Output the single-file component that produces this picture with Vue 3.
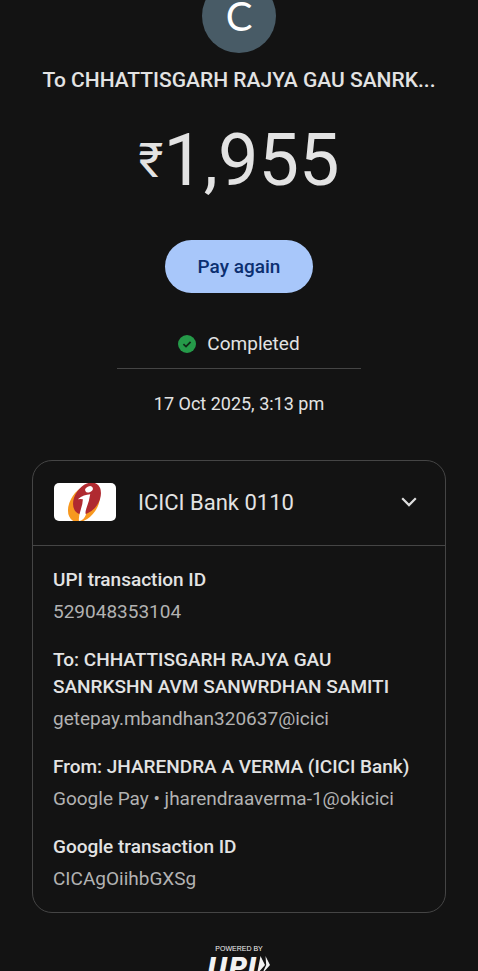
<script setup>
import { ref } from 'vue'

const open = ref(true)
const details = [
  { label: 'UPI transaction ID', value: '529048353104' },
  { label: 'To: CHHATTISGARH RAJYA GAU SANRKSHN AVM SANWRDHAN SAMITI', value: 'getepay.mbandhan320637@icici' },
  { label: 'From: JHARENDRA A VERMA (ICICI Bank)', value: 'Google Pay • jharendraaverma-1@okicici' },
  { label: 'Google transaction ID', value: 'CICAgOiihbGXSg' },
]
</script>

<template>
  <main class="page">
    <div class="avatar">C</div>
    <h1 class="payee">To CHHATTISGARH RAJYA GAU SANRK...</h1>
    <p class="amount"><span class="currency">₹</span><span>1,955</span></p>
    <button type="button" class="pay">Pay again</button>
    <div class="status">
      <svg class="tick" viewBox="0 0 18 18" aria-hidden="true">
        <circle cx="9" cy="9" r="9" fill="#259a49" />
        <path d="M5.4 9.2 L8 11.6 L12.6 6.9" fill="none" stroke="#102817" stroke-width="1.8" />
      </svg>
      <span>Completed</span>
    </div>
    <p class="date">17 Oct 2025, 3:13 pm</p>

    <section class="card">
      <button type="button" class="bank" :aria-expanded="open" @click="open = !open">
        <svg class="bank-logo" viewBox="0 0 62 38" aria-hidden="true">
          <rect width="62" height="38" rx="5" fill="#fff" />
          <ellipse cx="30" cy="20.500" rx="13.500" ry="20.500" transform="rotate(34 30 20.5)" fill="#f7981f" />
          <ellipse cx="33" cy="15.500" rx="12" ry="17.500" transform="rotate(34 33 15.5)" fill="#b02a30" />
          <ellipse cx="35" cy="6.300" rx="4" ry="2.900" transform="rotate(-25 35 6.3)" fill="#fff" />
          <path d="M23.800 16.200 Q30 11.500 36.200 11.300 Q35.500 17 32.500 25 Q30.800 30 32 31.500 Q29.500 38 25 38 Q24.300 34 26.800 26.500 Q29 20 28.800 16.200 Q26.500 16 23.800 16.200Z" fill="#fff" />
        </svg>
        <span class="bank-name">ICICI Bank 0110</span>
        <svg class="chevron" viewBox="0 0 16 10" aria-hidden="true">
          <path d="M1.200 1.300 L8 8.100 L14.800 1.300" fill="none" stroke="#dedede" stroke-width="2.200" />
        </svg>
      </button>
      <dl v-if="open" class="details">
        <div v-for="item in details" :key="item.label" class="detail">
          <dt>{{ item.label }}</dt>
          <dd>{{ item.value }}</dd>
        </div>
      </dl>
    </section>

    <footer class="footer">
      <span class="powered">POWERED BY</span>
      <div class="upi">
        <span>UPI</span>
        <svg class="arrows" viewBox="0 0 14 18" aria-hidden="true">
          <path d="M3.500 0 L8 9 L0 18Z M8.500 0 L13 9 L5 18 L9.200 9Z" fill="#f2f2f2" />
        </svg>
      </div>
    </footer>
  </main>
</template>

<style>
body {
  margin: 0;
  background: #131313;
}
</style>

<style scoped>
.page {
  display: flex;
  flex-direction: column;
  align-items: center;
  overflow: hidden;
  background: #131313;
  color: #e3e3e3;
  font-family: Roboto, "Noto Sans", sans-serif;
  font-size: 19px;
}
.avatar {
  width: 74px;
  height: 74px;
  margin-top: -21px;
  border-radius: 50%;
  background: #485b66;
  color: #fff;
  font-family: Lato, sans-serif;
  font-size: 40px;
  line-height: 74px;
  text-align: center;
}
.payee {
  margin: 13px 0 0;
  font-size: 21px;
  font-weight: 500;
  line-height: 28px;
  white-space: nowrap;
}
.amount {
  display: flex;
  align-items: flex-start;
  margin: 27px 0 0;
  font-size: 72px;
  line-height: 80px;
}
.currency {
  font-size: 48px;
}
.pay {
  height: 53px;
  margin-top: 39px;
  padding: 0 33px;
  border: 0;
  border-radius: 27px;
  background: #a8c7fa;
  color: #0b2f70;
  font: inherit;
  font-weight: 500;
}
.status {
  display: flex;
  align-items: center;
  justify-content: center;
  gap: 11px;
  box-sizing: border-box;
  width: 51%;
  height: 50px;
  margin-top: 26px;
  border-bottom: 1px solid #454545;
}
.tick {
  width: 18px;
  height: 18px;
}
.date {
  margin: 21px 0 0;
  font-size: 18px;
  line-height: 28px;
}
.card {
  align-self: stretch;
  margin: 42px 32px 0;
  border: 1px solid #454545;
  border-radius: 20px;
}
.bank {
  display: flex;
  align-items: center;
  box-sizing: border-box;
  width: 100%;
  height: 85px;
  padding: 0 28px 2px 21px;
  border: 0;
  border-bottom: 1px solid #454545;
  background: none;
  color: inherit;
  font: inherit;
  font-size: 22px;
  text-align: left;
}
.bank-logo {
  width: 62px;
  height: 38px;
}
.bank-name {
  flex: 1;
  margin-left: 22px;
}
.chevron {
  width: 16px;
  height: 10px;
}
.details {
  display: flex;
  flex-direction: column;
  gap: 21px;
  margin: 0;
  padding: 20px 20px;
}
.detail {
  display: flex;
  flex-direction: column;
  gap: 5px;
  line-height: 27px;
}
dt {
  font-weight: 500;
}
dd {
  margin: 0;
  color: #b2b2b2;
}
.footer {
  display: flex;
  flex-direction: column;
  align-items: center;
  height: 28px;
  margin-top: 31px;
  overflow: hidden;
  color: #f2f2f2;
}
.powered {
  font-family: "Liberation Sans", sans-serif;
  font-size: 7px;
  line-height: 9px;
}
.upi {
  display: flex;
  align-items: flex-start;
  font-family: "DejaVu Sans", sans-serif;
  font-size: 26px;
  font-style: italic;
  font-weight: 700;
  line-height: 30px;
}
.arrows {
  width: 14px;
  height: 18px;
  margin-top: 3px;
}
</style>
